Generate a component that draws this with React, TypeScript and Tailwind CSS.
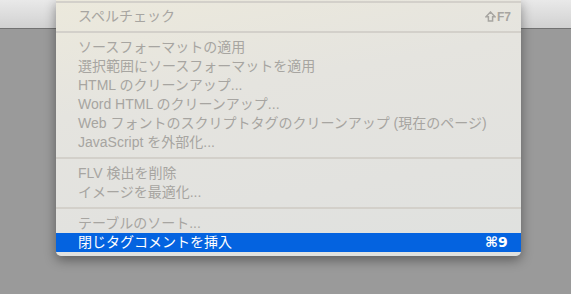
import React from "react";

const font = { fontFamily: '"Liberation Sans", "Noto Sans CJK JP", sans-serif' };

function Sep() {
  return (
    <div className="py-[5px]">
      <div className="h-[2px] bg-[#d3d0ca]" />
    </div>
  );
}

function Item({ label, shortcut }: { label: string; shortcut?: React.ReactNode }) {
  return (
    <div className="flex h-[19px] items-center pl-[22px] text-[14px] leading-[19px] text-[#a7a5a1]">
      <span className="flex-1 whitespace-nowrap">{label}</span>
      {shortcut && <span className="w-[36px] shrink-0">{shortcut}</span>}
    </div>
  );
}

function ShiftIcon() {
  return (
    <svg width="11" height="11" viewBox="0 0 11 11" className="block">
      <path d="M5.5 1 L10.1 5.8 L7.6 5.8 L7.6 10 L3.4 10 L3.4 5.8 L0.9 5.8 Z" fill="none" stroke="#a7a5a1" strokeWidth="1.5" strokeLinejoin="miter" />
    </svg>
  );
}

export default function App() {
  return (
    <div className="relative h-[294px] w-[571px] overflow-hidden bg-[#9a9a9a]" style={font}>
      <div className="h-[29px] border-b border-[#727272] bg-[linear-gradient(to_bottom,#e9e9e9,#d1d1d1)]" />
      <div className="absolute left-[56px] top-0 w-[465px] overflow-hidden rounded-b-[5px] bg-[linear-gradient(170deg,#ece9dc_0%,#e5e4df_35%,#e2e2df_70%,#dfe1df_100%)] pb-[4px] shadow-[0_4px_12px_rgba(0,0,0,0.4)]">
        <div className="pt-[1px] pb-[4px]">
          <div className="h-[2px] bg-[#d3d0ca]" />
        </div>
        <Item
          label="スペルチェック"
          shortcut={
            <span className="flex items-center gap-[1px] text-[12px] font-bold leading-none text-[#a7a5a1]">
              <ShiftIcon />
              <span>F7</span>
            </span>
          }
        />
        <Sep />
        <Item label="ソースフォーマットの適用" />
        <Item label="選択範囲にソースフォーマットを適用" />
        <Item label="HTML のクリーンアップ..." />
        <Item label="Word HTML のクリーンアップ..." />
        <Item label="Web フォントのスクリプトタグのクリーンアップ (現在のページ)" />
        <Item label="JavaScript を外部化..." />
        <Sep />
        <Item label="FLV 検出を削除" />
        <Item label="イメージを最適化..." />
        <Sep />
        <Item label="テーブルのソート..." />
        <div className="flex h-[19px] items-center bg-[#0463e0] pl-[22px] text-[14px] leading-[19px] text-white">
          <span className="flex-1 whitespace-nowrap">閉じタグコメントを挿入</span>
          <span className="w-[36px] shrink-0 text-[14px] font-bold" style={{ fontFamily: '"DejaVu Sans", sans-serif' }}>
            ⌘9
          </span>
        </div>
      </div>
    </div>
  );
}
